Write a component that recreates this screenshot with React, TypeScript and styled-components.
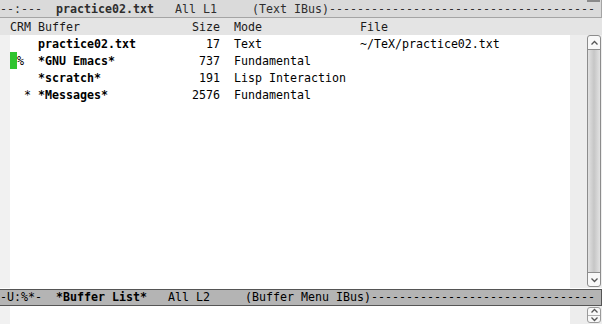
import styled, { createGlobalStyle } from "styled-components";

const GlobalStyle = createGlobalStyle`
  html, body {
    margin: 0;
    padding: 0;
    background: #ffffff;
  }
  body {
    font-family: "DejaVu Sans Mono", "Liberation Mono", monospace;
    font-size: 11.63px;
    color: #000000;
  }
`;

interface BufferEntry {
  marks: string;
  name: string;
  size: number;
  mode: string;
  file: string;
}

const buffers: BufferEntry[] = [
  { marks: "", name: "practice02.txt", size: 17, mode: "Text", file: "~/TeX/practice02.txt" },
  { marks: "%", name: "*GNU Emacs*", size: 737, mode: "Fundamental", file: "" },
  { marks: "", name: "*scratch*", size: 191, mode: "Lisp Interaction", file: "" },
  { marks: "  *", name: "*Messages*", size: 2576, mode: "Fundamental", file: "" },
];

// the window is 85 columns wide, the mode line fills the rest with dashes
const fill = (used: number) => "-".repeat(85 - used);

function Chevron({ up }: { up?: boolean }) {
  return (
    <svg width="9" height="6" viewBox="0 0 9 6">
      <polyline
        points={up ? "1.5,4.5 4.5,1.5 7.5,4.5" : "1.5,1.5 4.5,4.5 7.5,1.5"}
        fill="none"
        stroke="#555"
        strokeWidth="1.3"
      />
    </svg>
  );
}

function App() {
  const topLeft = "--:---  ";
  const topRight = "   All L1     (Text IBus)";
  const botLeft = "-U:%*-  ";
  const botRight = "   All L2     (Buffer Menu IBus)";

  return (
    <Frame>
      <GlobalStyle />
      <ModeLine>
        <ModeText>
          {topLeft}
          <b>practice02.txt</b>
          {topRight}
          {fill(topLeft.length + 14 + topRight.length)}
        </ModeText>
        <UpperEdge />
      </ModeLine>

      <HeaderLine>
        <Marks>CRM</Marks>
        <NameCol>Buffer</NameCol>
        <SizeCol>Size</SizeCol>
        <ModeCol>Mode</ModeCol>
        <span>File</span>
      </HeaderLine>

      <Window>
        <Fringe />
        <TextArea>
          {buffers.map((b, i) => (
            <Row key={b.name}>
              <Marks>
                {i === 1 && <Cursor />}
                {b.marks}
              </Marks>
              <NameCol bold>{b.name}</NameCol>
              <SizeCol>{b.size}</SizeCol>
              <ModeCol>{b.mode}</ModeCol>
              <span>{b.file}</span>
            </Row>
          ))}
        </TextArea>
        <ScrollTrack>
          <ScrollBox>
            <ArrowCell>
              <Chevron up />
            </ArrowCell>
            <Thumb />
            <ArrowCell bottom>
              <Chevron />
            </ArrowCell>
          </ScrollBox>
        </ScrollTrack>
      </Window>

      <ModeLine active>
        <ModeText>
          {botLeft}
          <b>*Buffer List*</b>
          {botRight}
          {fill(botLeft.length + 13 + botRight.length)}
        </ModeText>
      </ModeLine>

      <Minibuffer>
        <Fringe />
        <TextArea />
        <ScrollTrack>
          <MiniBox>
            <MiniArrow>
              <Chevron up />
            </MiniArrow>
            <MiniArrow>
              <Chevron />
            </MiniArrow>
          </MiniBox>
        </ScrollTrack>
      </Minibuffer>
    </Frame>
  );
}

const Frame = styled.div`
  width: 602px;
  height: 324px;
  display: flex;
  flex-direction: column;
  overflow: hidden;
`;

const ModeLine = styled.div<{ active?: boolean }>`
  position: relative;
  height: ${(p) => (p.active ? "17px" : "18px")};
  box-sizing: border-box;
  padding-top: ${(p) => (p.active ? "0" : "2px")};
  background: ${(p) => (p.active ? "#b4b4b4" : "#dadada")};
  color: ${(p) => (p.active ? "#000000" : "#2e2e2e")};
  border: 1px solid ${(p) => (p.active ? "#555555" : "#a4a4a4")};
  border-left: none;
  border-top: ${(p) => (p.active ? "1px solid #555555" : "none")};
  margin-top: ${(p) => (p.active ? "1px" : "0")};
  overflow: hidden;
  flex-shrink: 0;
`;

const ModeText = styled.div`
  white-space: pre;
  line-height: 15px;
`;

const UpperEdge = styled.div`
  position: absolute;
  top: 0;
  right: 1px;
  width: 13px;
  height: 2px;
  background: #8a8a8a;
`;

const HeaderLine = styled.div`
  height: 17px;
  box-sizing: border-box;
  padding: 2px 0 0 10px;
  line-height: 15px;
  background: #e4e4e4;
  color: #1a1a1a;
  display: flex;
  white-space: pre;
  flex-shrink: 0;
`;

const Window = styled.div`
  flex: 1;
  display: flex;
  min-height: 0;
`;

const Fringe = styled.div`
  width: 10px;
  background: #f1f1f1;
  flex-shrink: 0;
`;

const TextArea = styled.div`
  flex: 1;
  background: #ffffff;
`;

const Row = styled.div`
  height: 17px;
  box-sizing: border-box;
  padding-top: 2px;
  line-height: 15px;
  display: flex;
  white-space: pre;
`;

const Marks = styled.span`
  width: 4ch;
  flex-shrink: 0;
`;

const Cursor = styled.span`
  display: inline-block;
  width: 1ch;
  height: 17px;
  margin-top: -2px;
  margin-bottom: 0;
  vertical-align: top;
  background: #2fc42f;
`;

const NameCol = styled.span<{ bold?: boolean }>`
  width: 22ch;
  flex-shrink: 0;
  font-weight: ${(p) => (p.bold ? "bold" : "normal")};
`;

const SizeCol = styled.span`
  width: 4ch;
  text-align: right;
  flex-shrink: 0;
  margin-right: 2ch;
`;

const ModeCol = styled.span`
  width: 18ch;
  flex-shrink: 0;
`;

const ScrollTrack = styled.div`
  width: 32px;
  background: #ededed;
  display: flex;
  justify-content: flex-end;
  padding: 0 1px 1px 0;
  box-sizing: border-box;
  flex-shrink: 0;
`;

const ScrollBox = styled.div`
  width: 14px;
  box-sizing: border-box;
  border: 1px solid #8c8c8c;
  border-radius: 3px;
  background: #f8f8f8;
  display: flex;
  flex-direction: column;
`;

const ArrowCell = styled.div<{ bottom?: boolean }>`
  height: 13px;
  display: flex;
  align-items: center;
  justify-content: center;
  flex-shrink: 0;
  border-${(p) => (p.bottom ? "top" : "bottom")}: 1px solid #8c8c8c;
`;

const Thumb = styled.div`
  flex: 1;
  background: linear-gradient(to right, #e2e2e2, #c6c6c6 50%, #e2e2e2);
`;

const Minibuffer = styled.div`
  height: 18px;
  display: flex;
  flex-shrink: 0;
`;

const MiniBox = styled.div`
  width: 14px;
  margin-top: 1px;
  box-sizing: border-box;
  border: 1px solid #9a9a9a;
  border-radius: 3px;
  background: #f8f8f8;
  display: flex;
  flex-direction: column;
`;

const MiniArrow = styled.div`
  flex: 1;
  display: flex;
  align-items: center;
  justify-content: center;
  & + & {
    border-top: 1px solid #b0b0b0;
  }
`;

export default App;
